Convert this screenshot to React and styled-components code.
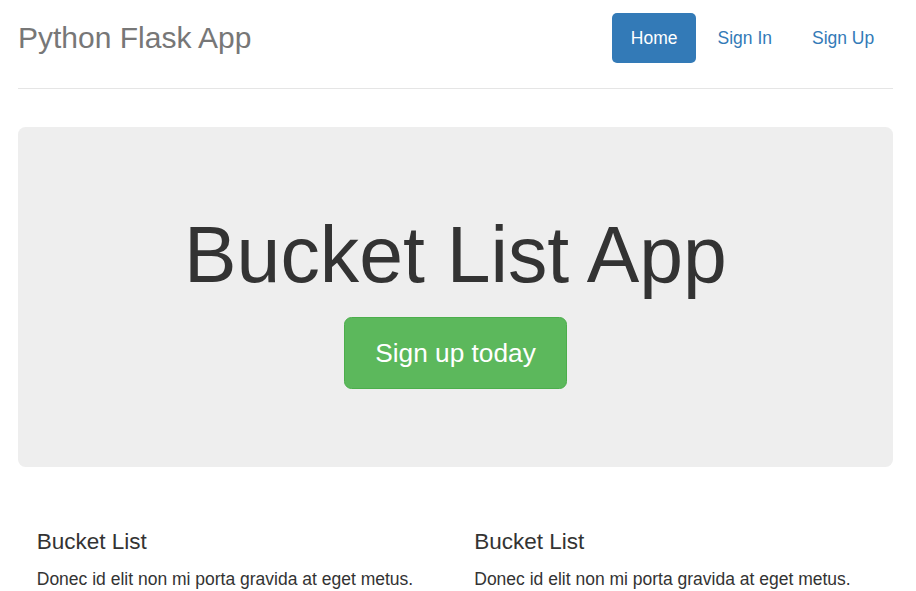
import React from "react";
import styled, { createGlobalStyle } from "styled-components";

const GlobalStyle = createGlobalStyle`
  body {
    margin: 0;
    background: #fff;
    color: #333;
    font-family: "Liberation Sans", Arial, sans-serif;
  }
  * {
    box-sizing: border-box;
  }
`;

const columns = [
  { title: "Bucket List", text: "Donec id elit non mi porta gravida at eget metus." },
  { title: "Bucket List", text: "Donec id elit non mi porta gravida at eget metus." },
];

export default function App() {
  return (
    <>
      <GlobalStyle />
      <Container>
        <Header>
          <Brand>Python Flask App</Brand>
          <Nav>
            <Pill active>Home</Pill>
            <Pill>Sign In</Pill>
            <Pill>Sign Up</Pill>
          </Nav>
        </Header>
        <Jumbotron>
          <Title>Bucket List App</Title>
          <CTA href="#">Sign up today</CTA>
        </Jumbotron>
        <Marketing>
          {columns.map((c, i) => (
            <Column key={i}>
              <ColTitle>{c.title}</ColTitle>
              <ColText>{c.text}</ColText>
            </Column>
          ))}
        </Marketing>
      </Container>
    </>
  );
}

const Container = styled.div`
  margin: 0 23px 0 18px;
  padding-top: 13px;
`;

const Header = styled.header`
  display: flex;
  justify-content: space-between;
  align-items: center;
  padding-bottom: 25px;
  border-bottom: 1px solid #e5e5e5;
`;

const Brand = styled.h3`
  margin: 0;
  font-size: 30px;
  font-weight: 400;
  line-height: 50px;
  color: #777;
`;

const Nav = styled.nav`
  display: flex;
  gap: 2.5px;
`;

const Pill = styled.a`
  display: block;
  padding: 12.5px 18.75px;
  font-size: 17.5px;
  line-height: 25px;
  border-radius: 5px;
  text-decoration: none;
  cursor: pointer;
  color: ${(p) => (p.active ? "#fff" : "#337ab7")};
  background: ${(p) => (p.active ? "#337ab7" : "transparent")};
`;

const Jumbotron = styled.section`
  margin-top: 38px;
  padding: 85px 0 78px;
  background: #eee;
  border-radius: 7.5px;
  display: flex;
  flex-direction: column;
  align-items: center;
  text-align: center;
`;

const Title = styled.h1`
  margin: 0 0 19px;
  font-size: 78.75px;
  font-weight: 400;
  line-height: 86px;
  color: #333;
`;

const CTA = styled.a`
  display: inline-block;
  padding: 17.5px 30px;
  font-size: 26.25px;
  line-height: 35px;
  color: #fff;
  background: #5cb85c;
  border: 1px solid #4cae4c;
  border-radius: 7.5px;
  text-decoration: none;
`;

const Marketing = styled.div`
  display: grid;
  grid-template-columns: 1fr 1fr;
  margin-top: 50px;
`;

const Column = styled.div`
  padding: 0 18.75px;
`;

const ColTitle = styled.h4`
  margin: 12.5px 0;
  font-size: 22.5px;
  font-weight: 400;
  line-height: 24.75px;
  color: #333;
`;

const ColText = styled.p`
  margin: 0 0 12.5px;
  font-size: 17.5px;
  line-height: 25px;
`;
